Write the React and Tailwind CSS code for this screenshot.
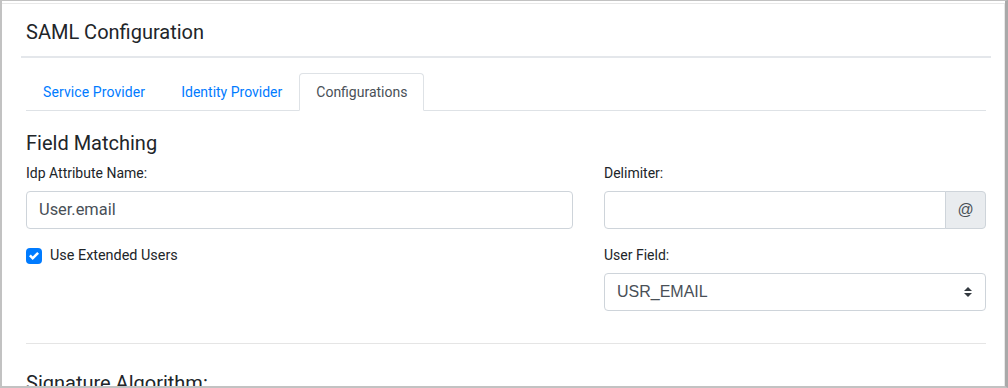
import React from 'react';

const font = { fontFamily: 'Roboto, "Liberation Sans", Arial, sans-serif' };
const arial = { fontFamily: '"Liberation Sans", Arial, sans-serif' };

function Tab({ label, active, wide }) {
  if (active) {
    return (
      <div className="-mb-px rounded-t-[4px] border border-[#dee2e6] border-b-white bg-white px-4 pt-[8px] pb-[7px] text-[14px] leading-[21px] text-[#495057]">
        {label}
      </div>
    );
  }
  return (
    <div
      className={
        wide
          ? '-mb-px border border-transparent pl-4 pr-[18px] pt-[8px] pb-[7px] text-[14px] leading-[21px] tracking-[0.1px] text-[#007bff]'
          : '-mb-px border border-transparent px-4 pt-[8px] pb-[7px] text-[14px] leading-[21px] text-[#007bff]'
      }
    >
      {label}
    </div>
  );
}

export default function App() {
  return (
    <div
      className="h-[388px] w-[1008px] overflow-hidden border-t border-l-2 border-r-[3px] border-b-2 border-t-[#c2c2c2] border-l-[#c2c2c2] border-r-[#a9a9a9] border-b-[#c2c2c2] bg-white text-[#212529]"
      style={font}
    >
      <div className="mt-[2px] h-full border-t border-r border-[#e8e8e8] pl-[19px] pr-[13px]">
        {/* header */}
        <div className="border-b-2 border-[#e4e7eb] px-[5px] pt-[16px] pb-[12px]">
          <h4 className="text-[20px] leading-[24px] font-normal">SAML Configuration</h4>
        </div>

        <div className="px-[5px]">
          {/* tabs */}
          <div className="mt-[15px] flex border-b border-[#dee2e6]">
            <Tab label="Service Provider" wide />
            <Tab label="Identity Provider" />
            <Tab label="Configurations" active />
          </div>

          <h5 className="mt-[20px] mb-[8px] text-[20px] leading-[24px] font-normal">Field Matching</h5>

          <div className="grid grid-cols-[547px_1fr] gap-x-[31px]">
            <div>
              <label className="block text-[14px] leading-[21px]">Idp Attribute Name:</label>
              <div className="mt-[7px] flex h-[38px] items-center rounded-[4px] border border-[#ced4da] px-3 text-[16.4px] text-[#495057]">
                User.email
              </div>
              <div className="mt-[16px] flex items-center gap-2 text-[14.4px] leading-[21px]">
                <span className="flex h-4 w-4 items-center justify-center rounded-[4px] bg-[#007bff]">
                  <svg width="10" height="10" viewBox="0 0 8 8">
                    <path fill="#fff" d="M6.564.75l-3.59 3.612-1.538-1.55L0 4.26 2.974 7.25 8 2.193z" />
                  </svg>
                </span>
                <span>Use Extended Users</span>
              </div>
            </div>

            <div>
              <label className="block text-[14px] leading-[21px]">Delimiter:</label>
              <div className="mt-[7px] flex h-[38px]">
                <div className="flex-1 rounded-l-[4px] border border-[#ced4da]" />
                <div
                  className="-ml-px flex w-[41px] items-center justify-center rounded-r-[4px] border border-[#ced4da] bg-[#e9ecef] text-[16px] text-[#495057]"
                  style={arial}
                >
                  @
                </div>
              </div>
              <label className="mt-[16px] block text-[14px] leading-[21px]">User Field:</label>
              <div className="mt-[7px] flex h-[38px] items-center justify-between rounded-[4px] border border-[#ced4da] pl-3 pr-[13px] text-[16px] text-[#495057]">
                <span style={arial}>USR_EMAIL</span>
                <svg width="8" height="10" viewBox="0 0 8 10">
                  <path fill="#343a40" d="M4 0L0 4h8zM4 10L0 6h8z" />
                </svg>
              </div>
            </div>
          </div>

          <hr className="mt-[32px] border-t border-[#e5e5e5]" />

          <h5 className="mt-[27px] text-[20px] leading-[24px] font-normal">Signature Algorithm:</h5>
        </div>
      </div>
    </div>
  );
}
